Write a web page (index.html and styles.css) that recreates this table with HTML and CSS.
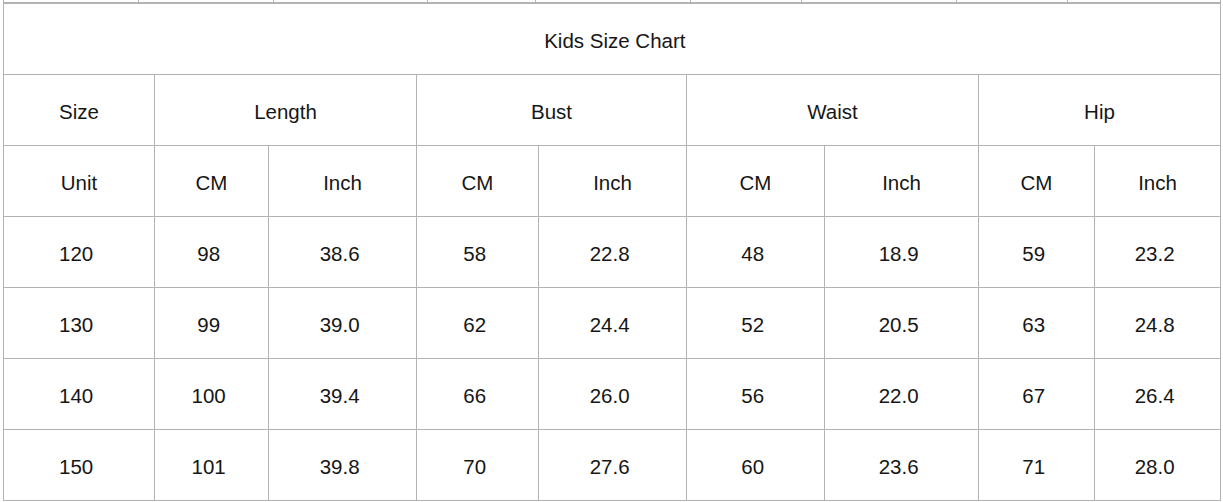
FILE: index.html
```html
<!DOCTYPE html>
<html lang="en">
<head>
<meta charset="utf-8">
<title>Kids Size Chart</title>
<link rel="stylesheet" href="styles.css">
</head>
<body>
<div class="prev">
  <div class="pc"></div><div class="pc"></div><div class="pc"></div><div class="pc"></div><div class="pc"></div><div class="pc"></div><div class="pc"></div><div class="pc"></div><div class="pc last"></div>
</div>
<div class="chart">
  <div class="c span9">&nbsp;Kids Size Chart</div>

  <div class="c">Size</div>
  <div class="c span2">Length</div>
  <div class="c span2">Bust</div>
  <div class="c span2">Waist</div>
  <div class="c span2">Hip</div>

  <div class="c">Unit</div>
  <div class="c">CM</div><div class="c">Inch</div>
  <div class="c">CM</div><div class="c">Inch</div>
  <div class="c">CM</div><div class="c">Inch</div>
  <div class="c">CM</div><div class="c">Inch</div>

  <div class="c">120&nbsp;</div><div class="c">98&nbsp;</div><div class="c">38.6&nbsp;</div><div class="c">58&nbsp;</div><div class="c">22.8&nbsp;</div><div class="c">48&nbsp;</div><div class="c">18.9&nbsp;</div><div class="c">59&nbsp;</div><div class="c">23.2&nbsp;</div>
  <div class="c">130&nbsp;</div><div class="c">99&nbsp;</div><div class="c">39.0&nbsp;</div><div class="c">62&nbsp;</div><div class="c">24.4&nbsp;</div><div class="c">52&nbsp;</div><div class="c">20.5&nbsp;</div><div class="c">63&nbsp;</div><div class="c">24.8&nbsp;</div>
  <div class="c">140&nbsp;</div><div class="c">100&nbsp;</div><div class="c">39.4&nbsp;</div><div class="c">66&nbsp;</div><div class="c">26.0&nbsp;</div><div class="c">56&nbsp;</div><div class="c">22.0&nbsp;</div><div class="c">67&nbsp;</div><div class="c">26.4&nbsp;</div>
  <div class="c">150&nbsp;</div><div class="c">101&nbsp;</div><div class="c">39.8&nbsp;</div><div class="c">70&nbsp;</div><div class="c">27.6&nbsp;</div><div class="c">60&nbsp;</div><div class="c">23.6&nbsp;</div><div class="c">71&nbsp;</div><div class="c">28.0&nbsp;</div>
</div>
</body>
</html>
```

FILE: styles.css
```css
html, body {
  margin: 0;
  padding: 0;
  background: #ffffff;
}

body {
  font-family: "Liberation Sans", Arial, sans-serif;
  color: #161616;
}

.prev {
  display: grid;
  grid-template-columns: 135px 135px 154px 108px 155px 111px 155px 111px 154px;
  margin-left: 3px;
  width: 1218px;
  height: 2px;
  border-bottom: 1px solid #b3b3b3;
}

.pc {
  box-sizing: border-box;
  border-left: 1px solid #b3b3b3;
}

.pc.last {
  border-right: 1px solid #b3b3b3;
}

.chart {
  display: grid;
  grid-template-columns: 151px 114px 148px 122px 148px 138px 154px 116px 126px;
  grid-auto-rows: 71px;
  margin-left: 3px;
  width: 1217px;
  border-left: 1px solid #b3b3b3;
  border-top: 1px solid #b3b3b3;
}

.c {
  box-sizing: border-box;
  border-right: 1px solid #b3b3b3;
  border-bottom: 1px solid #b3b3b3;
  display: flex;
  align-items: center;
  justify-content: center;
  font-size: 20.5px;
  line-height: 24px;
  padding-top: 4px;
  white-space: pre;
}

.span9 {
  grid-column: span 9;
}

.span2 {
  grid-column: span 2;
}
```
